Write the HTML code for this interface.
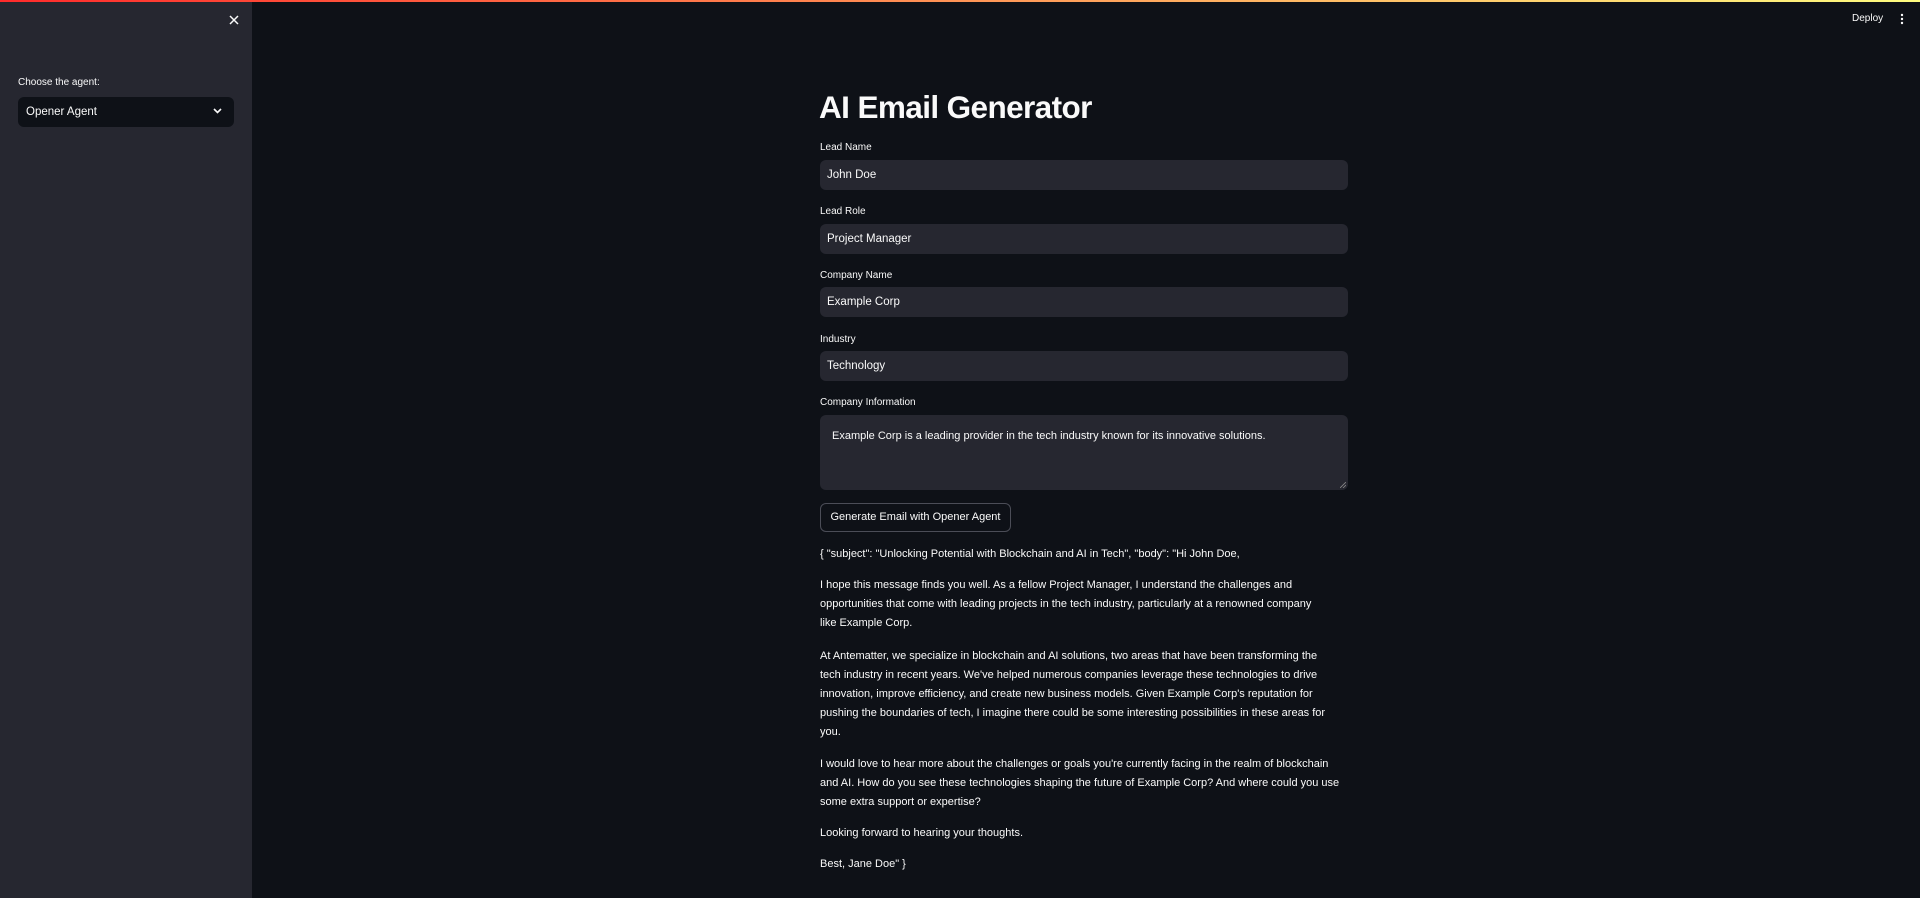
<!DOCTYPE html>
<html><head><meta charset="utf-8"><style>
*{margin:0;padding:0;box-sizing:border-box}
body{width:1920px;height:898px;background:#0e1117;font-family:"Liberation Sans",sans-serif;color:#fafafa;position:relative;overflow:hidden}
.bar{position:absolute;top:0;left:0;width:1920px;height:2px;background:linear-gradient(90deg,#ff2b2b,#fffd80)}
.side{position:absolute;top:2px;left:0;width:252px;height:896px;background:#262730}
.a{position:absolute;white-space:nowrap}
.lbl{font-size:10px;color:#fafafa}
.inp{position:absolute;left:820px;width:528px;height:30px;background:#262730;border-radius:6px;font-size:11.5px;padding:9px 7px;color:#fafafa}
.t{position:absolute;left:820px;font-size:11px;white-space:nowrap;color:#fafafa}
</style></head><body>
<div class="bar"></div>
<div class="side">
<svg class="a" style="left:229px;top:13px" width="10" height="10" viewBox="0 0 10 10"><path d="M1 1L9 9M9 1L1 9" stroke="#fafafa" stroke-width="1.5"/></svg>
<div class="a lbl" style="left:18px;top:75px">Choose the agent:</div>
<div class="a" style="left:18px;top:95px;width:216px;height:30px;background:#0e1117;border-radius:6px;font-size:11.5px;padding:9px 8px">Opener Agent</div>
<svg class="a" style="left:213px;top:106px" width="9" height="6" viewBox="0 0 9 6"><path d="M1 1L4.5 4.5L8 1" stroke="#fafafa" stroke-width="1.6" fill="none"/></svg>
</div>
<div class="a" style="left:1852px;top:13px;font-size:10px">Deploy</div>
<svg class="a" style="left:1900px;top:13px" width="4" height="12" viewBox="0 0 4 12"><circle cx="2" cy="2" r="1.2" fill="#fafafa"/><circle cx="2" cy="6" r="1.2" fill="#fafafa"/><circle cx="2" cy="10" r="1.2" fill="#fafafa"/></svg>

<div class="a" style="left:819px;top:89px;font-size:31.5px;font-weight:bold;letter-spacing:-0.6px">AI Email Generator</div>
<div class="a lbl" style="left:820px;top:142px">Lead Name</div>
<div class="inp" style="top:160px">John Doe</div>
<div class="a lbl" style="left:820px;top:206px">Lead Role</div>
<div class="inp" style="top:224px">Project Manager</div>
<div class="a lbl" style="left:820px;top:270px">Company Name</div>
<div class="inp" style="top:287px">Example Corp</div>
<div class="a lbl" style="left:820px;top:334px">Industry</div>
<div class="inp" style="top:351px">Technology</div>
<div class="a lbl" style="left:820px;top:397px">Company Information</div>
<div class="inp" style="top:415px;height:75px;padding:15px 12px;font-size:11px">Example Corp is a leading provider in the tech industry known for its innovative solutions.</div>
<svg class="a" style="left:1340px;top:482px" width="6" height="6" viewBox="0 0 6 6"><path d="M0 6L6 0M3 6L6 3" stroke="#888" stroke-width="0.8"/></svg>
<div class="a" style="left:820px;top:503px;width:191px;height:29px;border:1px solid #4b4d57;border-radius:6px;font-size:11px;text-align:center;line-height:27px">Generate Email with Opener Agent</div>

<div class="t" style="top:548px">{ "subject": "Unlocking Potential with Blockchain and AI in Tech", "body": "Hi John Doe,</div>
<div class="t" style="top:579px">I hope this message finds you well. As a fellow Project Manager, I understand the challenges and</div>
<div class="t" style="top:598px">opportunities that come with leading projects in the tech industry, particularly at a renowned company</div>
<div class="t" style="top:617px">like Example Corp.</div>
<div class="t" style="top:650px">At Antematter, we specialize in blockchain and AI solutions, two areas that have been transforming the</div>
<div class="t" style="top:669px">tech industry in recent years. We've helped numerous companies leverage these technologies to drive</div>
<div class="t" style="top:688px">innovation, improve efficiency, and create new business models. Given Example Corp's reputation for</div>
<div class="t" style="top:707px">pushing the boundaries of tech, I imagine there could be some interesting possibilities in these areas for</div>
<div class="t" style="top:726px">you.</div>
<div class="t" style="top:758px">I would love to hear more about the challenges or goals you're currently facing in the realm of blockchain</div>
<div class="t" style="top:777px">and AI. How do you see these technologies shaping the future of Example Corp? And where could you use</div>
<div class="t" style="top:796px">some extra support or expertise?</div>
<div class="t" style="top:827px">Looking forward to hearing your thoughts.</div>
<div class="t" style="top:858px">Best, Jane Doe" }</div>
</body></html>
